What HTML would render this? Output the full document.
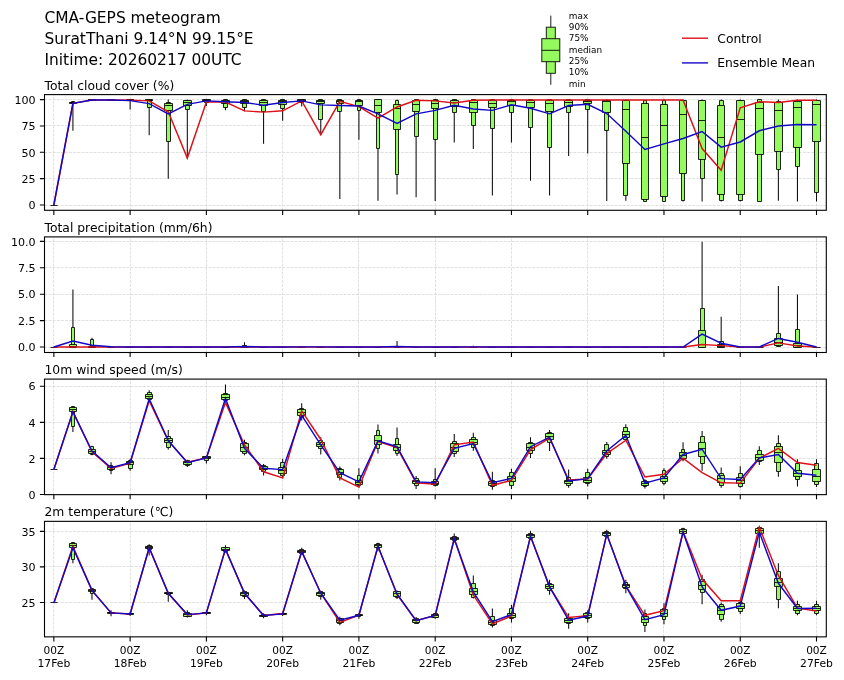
<!DOCTYPE html>
<html lang="en"><head><meta charset="utf-8"><title>CMA-GEPS meteogram</title>
<style>html,body{margin:0;padding:0;background:#fff}body{width:844px;height:680px;overflow:hidden}</style></head>
<body>
<svg width="844" height="680" viewBox="0 0 844 680" style="display:block;will-change:transform;font-family:'DejaVu Sans','Liberation Sans',sans-serif">
<rect width="844" height="680" fill="#fff"/>
<g font-size="15.43" fill="#000">
<text x="44.5" y="22.7">CMA-GEPS meteogram</text>
<text x="44.5" y="43.7">SuratThani 9.14°N 99.15°E</text>
<text x="44.5" y="64.7">Initime: 20260217 00UTC</text>
</g>
<g stroke="#111" stroke-width="0.95">
<line x1="550.8" y1="15.6" x2="550.8" y2="84.8"/>
<rect x="546.3" y="27.2" width="9" height="46.1" fill="#94fa5e"/>
<rect x="541.8" y="38.7" width="18" height="23" fill="#94fa5e"/>
<line x1="541.8" y1="50.3" x2="559.8" y2="50.3"/>
</g>
<g font-size="8.33" fill="#000" transform="translate(568.8 0) scale(1.07 1)">
<text x="0" y="18.7">max</text>
<text x="0" y="30.06">90%</text>
<text x="0" y="41.42">75%</text>
<text x="0" y="52.78">median</text>
<text x="0" y="64.14">25%</text>
<text x="0" y="75.5">10%</text>
<text x="0" y="86.86">min</text>
</g>
<line x1="682" y1="38.2" x2="708" y2="38.2" stroke="#dc1018" stroke-width="1.4"/>
<line x1="682" y1="62.9" x2="708" y2="62.9" stroke="#1408c8" stroke-width="1.4"/>
<g font-size="12.3" fill="#000"><text x="717.3" y="42.7">Control</text><text x="717.3" y="67.1">Ensemble Mean</text></g>
<g>
<text x="44.5" y="89.7" font-size="12.35" fill="#000">Total cloud cover (%)</text>
<clipPath id="c1"><rect x="44.5" y="94.6" width="781.8" height="115.7"/></clipPath>
<path d="M53.5 210.3V94.6M130.5 210.3V94.6M206.5 210.3V94.6M282.5 210.3V94.6M358.5 210.3V94.6M435.5 210.3V94.6M511.5 210.3V94.6M587.5 210.3V94.6M663.5 210.3V94.6M740.5 210.3V94.6M816.5 210.3V94.6M44.5 205.5H826.3M44.5 178.5H826.3M44.5 152.5H826.3M44.5 125.5H826.3M44.5 99.5H826.3" stroke="#d2d2d2" stroke-width="0.7" stroke-dasharray="2.85 1.25" fill="none"/>
<g clip-path="url(#c1)">
<path d="M72.92 130.69V101.08M91.98 100.65V99.6M111.05 100.65V99.6M130.12 109.51V99.6M149.18 135.23V99.6M168.25 178.65V99.6M187.31 158.1V99.6M206.38 105.92V99.6M225.45 110.35V99.6M244.51 111.19V99.6M263.58 143.87V99.6M282.65 120.79V99.6M301.71 106.56V99.6M320.78 134.7V99.6M339.84 198.89V99.6M358.91 139.86V99.6M377.98 200.68V99.6M397.04 194.57V99.6M416.11 197.2V99.6M435.18 200.99V99.6M454.24 142.5V99.6M473.31 148.93V99.6M492.37 195.41V99.6M511.44 142.5V99.6M530.51 180.65V99.6M549.57 195.41V99.6M568.64 155.88V99.6M587.71 153.46V99.6M606.77 200.99V99.6M625.84 200.68V99.6M644.91 201.84V100.13M663.97 201.84V99.6M683.04 201.52V99.6M702.1 201.52V99.6M721.17 201.52V99.6M740.24 201.52V99.6M759.3 201.84V99.6M778.37 200.68V99.6M797.44 201.52V99.6M816.5 201.52V99.6" stroke="#0a0a0a" stroke-width="1.05" fill="none"/>
<path d="M71.5 101.5H74.5V103.5H71.5ZM90.5 99.5H93.5V100.5H90.5ZM109.5 99.5H112.5V100.5H109.5ZM128.5 99.5H132.5V100.5H128.5ZM147.5 99.5H151.5V107.5H147.5ZM166.5 102.5H170.5V141.5H166.5ZM185.5 100.5H189.5V109.5H185.5ZM204.5 99.5H208.5V102.5H204.5ZM223.5 99.5H227.5V107.5H223.5ZM242.5 99.5H246.5V107.5H242.5ZM261.5 99.5H265.5V111.5H261.5ZM280.5 99.5H284.5V108.5H280.5ZM299.5 99.5H303.5V102.5H299.5ZM318.5 99.5H322.5V119.5H318.5ZM337.5 99.5H341.5V111.5H337.5ZM357.5 99.5H360.5V110.5H357.5ZM376.5 99.5H379.5V148.5H376.5ZM395.5 100.5H398.5V174.5H395.5ZM414.5 99.5H418.5V136.5H414.5ZM433.5 99.5H437.5V139.5H433.5ZM452.5 99.5H456.5V112.5H452.5ZM471.5 99.5H475.5V125.5H471.5ZM490.5 99.5H494.5V128.5H490.5ZM509.5 99.5H513.5V112.5H509.5ZM528.5 99.5H532.5V127.5H528.5ZM547.5 99.5H551.5V147.5H547.5ZM566.5 99.5H570.5V112.5H566.5ZM585.5 99.5H589.5V109.5H585.5ZM604.5 100.5H608.5V130.5H604.5ZM623.5 100.5H627.5V195.5H623.5ZM643.5 100.5H646.5V201.5H643.5ZM662.5 100.5H665.5V201.5H662.5ZM681.5 100.5H684.5V200.5H681.5ZM700.5 100.5H704.5V178.5H700.5ZM719.5 100.5H723.5V200.5H719.5ZM738.5 100.5H742.5V200.5H738.5ZM757.5 99.5H761.5V201.5H757.5ZM776.5 101.5H780.5V169.5H776.5ZM795.5 100.5H799.5V166.5H795.5ZM814.5 100.5H818.5V192.5H814.5Z" stroke="#000" stroke-width="0.85" fill="#94fa5e"/>
<path d="M69.5 102.5H76.5V103.5H69.5ZM88.5 99.5H95.5V100.5H88.5ZM107.5 99.5H114.5V100.5H107.5ZM126.5 99.5H133.5V100.5H126.5ZM145.5 99.5H152.5V100.5H145.5ZM164.5 103.5H172.5V110.5H164.5ZM183.5 100.5H191.5V105.5H183.5ZM202.5 99.5H210.5V100.5H202.5ZM221.5 100.5H229.5V103.5H221.5ZM240.5 100.5H248.5V103.5H240.5ZM259.5 100.5H267.5V105.5H259.5ZM278.5 100.5H286.5V104.5H278.5ZM297.5 99.5H305.5V101.5H297.5ZM316.5 100.5H324.5V103.5H316.5ZM336.5 100.5H343.5V103.5H336.5ZM355.5 100.5H362.5V105.5H355.5ZM374.5 99.5H381.5V112.5H374.5ZM393.5 104.5H400.5V129.5H393.5ZM412.5 100.5H419.5V111.5H412.5ZM431.5 100.5H438.5V108.5H431.5ZM450.5 100.5H458.5V106.5H450.5ZM469.5 100.5H477.5V112.5H469.5ZM488.5 100.5H496.5V107.5H488.5ZM507.5 100.5H515.5V105.5H507.5ZM526.5 100.5H534.5V107.5H526.5ZM545.5 100.5H553.5V111.5H545.5ZM564.5 100.5H572.5V106.5H564.5ZM583.5 100.5H591.5V103.5H583.5ZM602.5 100.5H610.5V112.5H602.5ZM622.5 100.5H629.5V163.5H622.5ZM641.5 103.5H648.5V199.5H641.5ZM660.5 104.5H667.5V196.5H660.5ZM679.5 100.5H686.5V173.5H679.5ZM698.5 100.5H705.5V159.5H698.5ZM717.5 105.5H724.5V194.5H717.5ZM736.5 100.5H744.5V194.5H736.5ZM755.5 102.5H763.5V154.5H755.5ZM774.5 102.5H782.5V151.5H774.5ZM793.5 101.5H801.5V147.5H793.5ZM812.5 100.5H820.5V141.5H812.5Z" stroke="#000" stroke-width="0.85" fill="#94fa5e"/>
<path d="M50.5 205.5H57.5M69.5 102.5H76.5M88.5 99.5H95.5M107.5 99.5H114.5M126.5 99.5H133.5M145.5 100.5H152.5M164.5 105.5H172.5M183.5 102.5H191.5M202.5 100.5H210.5M221.5 101.5H229.5M240.5 101.5H248.5M259.5 102.5H267.5M278.5 101.5H286.5M297.5 100.5H305.5M316.5 101.5H324.5M336.5 101.5H343.5M355.5 101.5H362.5M374.5 105.5H381.5M393.5 108.5H400.5M412.5 104.5H419.5M431.5 103.5H438.5M450.5 102.5H458.5M469.5 102.5H477.5M488.5 103.5H496.5M507.5 101.5H515.5M526.5 102.5H534.5M545.5 103.5H553.5M564.5 102.5H572.5M583.5 101.5H591.5M602.5 101.5H610.5M622.5 109.5H629.5M641.5 137.5H648.5M660.5 125.5H667.5M679.5 114.5H686.5M698.5 120.5H705.5M717.5 137.5H724.5M736.5 119.5H744.5M755.5 108.5H763.5M774.5 110.5H782.5M793.5 107.5H801.5M812.5 104.5H820.5" stroke="#000" stroke-width="0.85" fill="none"/>
<polyline points="53.85,205 72.92,103.39 91.98,99.92 111.05,99.92 130.12,100.13 149.18,100.86 168.25,111.83 187.31,158.1 206.38,102.02 225.45,102.02 244.51,110.88 263.58,112.14 282.65,110.77 301.71,100.86 320.78,134.7 339.84,101.39 358.91,106.56 377.98,118.15 397.04,106.98 416.11,100.34 435.18,100.86 454.24,103.08 473.31,100.34 492.37,99.92 511.44,99.92 530.51,99.92 549.57,99.92 568.64,99.92 587.71,99.92 606.77,99.92 625.84,99.92 644.91,99.92 663.97,99.92 683.04,99.92 702.1,148.51 721.17,170.22 740.24,107.72 759.3,101.71 778.37,102.55 797.44,100.34 816.5,100.34" stroke="#dc1018" stroke-width="1.45" fill="none" stroke-linejoin="miter"/>
<polyline points="53.85,205 72.92,103.39 91.98,99.92 111.05,99.92 130.12,100.65 149.18,103.61 168.25,113.93 187.31,104.34 206.38,100.86 225.45,101.71 244.51,102.55 263.58,105.19 282.65,102.55 301.71,100.86 320.78,104.87 339.84,105.5 358.91,106.03 377.98,113.83 397.04,123.42 416.11,113.83 435.18,110.35 454.24,105.19 473.31,108.98 492.37,110.35 511.44,104.76 530.51,108.24 549.57,113.83 568.64,105.5 587.71,104.34 606.77,113.51 625.84,131.33 644.91,149.45 663.97,143.87 683.04,138.49 702.1,131.54 721.17,147.14 740.24,141.97 759.3,130.8 778.37,125.95 797.44,124.58 816.5,124.79" stroke="#1408c8" stroke-width="1.45" fill="none" stroke-linejoin="miter"/>
</g>
<rect x="44.5" y="94.6" width="781.8" height="115.7" fill="none" stroke="#000" stroke-width="1.1"/>
<path d="M53.85 210.3v4.6M130.12 210.3v4.6M206.38 210.3v4.6M282.65 210.3v4.6M358.91 210.3v4.6M435.18 210.3v4.6M511.44 210.3v4.6M587.71 210.3v4.6M663.97 210.3v4.6M740.24 210.3v4.6M816.5 210.3v4.6M44.5 205h-4.6M44.5 178.65h-4.6M44.5 152.3h-4.6M44.5 125.95h-4.6M44.5 99.6h-4.6" stroke="#000" stroke-width="1.1" fill="none"/>
<g font-size="11.11" fill="#000" text-anchor="end">
<text x="35.7" y="209.2">0</text>
<text x="35.7" y="182.85">25</text>
<text x="35.7" y="156.5">50</text>
<text x="35.7" y="130.15">75</text>
<text x="35.7" y="103.8">100</text>
</g>
</g>
<g>
<text x="44.5" y="232" font-size="12.35" fill="#000">Total precipitation (mm/6h)</text>
<clipPath id="c2"><rect x="44.5" y="236.9" width="781.8" height="115.6"/></clipPath>
<path d="M53.5 352.5V236.9M130.5 352.5V236.9M206.5 352.5V236.9M282.5 352.5V236.9M358.5 352.5V236.9M435.5 352.5V236.9M511.5 352.5V236.9M587.5 352.5V236.9M663.5 352.5V236.9M740.5 352.5V236.9M816.5 352.5V236.9M44.5 347.5H826.3M44.5 320.5H826.3M44.5 294.5H826.3M44.5 267.5H826.3M44.5 241.5H826.3" stroke="#d2d2d2" stroke-width="0.7" stroke-dasharray="2.85 1.25" fill="none"/>
<g clip-path="url(#c2)">
<path d="M72.92 347V289.55M91.98 347V337.81M111.05 347V346.68M244.51 347V342.14M301.71 347V345.94M320.78 347V345.94M397.04 347V341.09M473.31 347V345.73M702.1 347V241.82M721.17 347V316.69M778.37 347V285.96M797.44 347V294.52" stroke="#0a0a0a" stroke-width="1.05" fill="none"/>
<path d="M71.5 327.5H74.5V347.5H71.5ZM90.5 339.5H93.5V347.5H90.5ZM242.5 345.5H246.5V347.5H242.5ZM700.5 308.5H704.5V347.5H700.5ZM719.5 341.5H723.5V347.5H719.5ZM776.5 333.5H780.5V346.5H776.5ZM795.5 329.5H799.5V347.5H795.5Z" stroke="#000" stroke-width="0.85" fill="#94fa5e"/>
<path d="M69.5 344.5H76.5V347.5H69.5ZM88.5 346.5H95.5V347.5H88.5ZM240.5 346.5H248.5V347.5H240.5ZM698.5 330.5H705.5V347.5H698.5ZM717.5 344.5H724.5V347.5H717.5ZM774.5 338.5H782.5V345.5H774.5ZM793.5 343.5H801.5V347.5H793.5Z" stroke="#000" stroke-width="0.85" fill="#94fa5e"/>
<path d="M50.5 347.5H57.5M69.5 346.5H76.5M88.5 347.5H95.5M107.5 347.5H114.5M126.5 347.5H133.5M145.5 347.5H152.5M164.5 347.5H172.5M183.5 347.5H191.5M202.5 347.5H210.5M221.5 347.5H229.5M240.5 347.5H248.5M259.5 347.5H267.5M278.5 347.5H286.5M297.5 347.5H305.5M316.5 347.5H324.5M336.5 347.5H343.5M355.5 347.5H362.5M374.5 347.5H381.5M393.5 347.5H400.5M412.5 347.5H419.5M431.5 347.5H438.5M450.5 347.5H458.5M469.5 347.5H477.5M488.5 347.5H496.5M507.5 347.5H515.5M526.5 347.5H534.5M545.5 347.5H553.5M564.5 347.5H572.5M583.5 347.5H591.5M602.5 347.5H610.5M622.5 347.5H629.5M641.5 347.5H648.5M660.5 347.5H667.5M679.5 347.5H686.5M698.5 344.5H705.5M717.5 346.5H724.5M736.5 347.5H744.5M755.5 347.5H763.5M774.5 342.5H782.5M793.5 345.5H801.5M812.5 347.5H820.5" stroke="#000" stroke-width="0.85" fill="none"/>
<polyline points="53.85,347 72.92,347 91.98,347 111.05,347 130.12,347 149.18,347 168.25,347 187.31,347 206.38,347 225.45,347 244.51,347 263.58,347 282.65,347 301.71,347 320.78,347 339.84,347 358.91,347 377.98,347 397.04,347 416.11,347 435.18,347 454.24,347 473.31,347 492.37,347 511.44,347 530.51,347 549.57,347 568.64,347 587.71,347 606.77,347 625.84,347 644.91,347 663.97,347 683.04,347 702.1,344.57 721.17,345.63 740.24,347 759.3,347 778.37,342.88 797.44,346.05 816.5,347" stroke="#dc1018" stroke-width="1.45" fill="none" stroke-linejoin="miter"/>
<polyline points="53.85,347 72.92,340.98 91.98,345.31 111.05,346.79 130.12,347 149.18,347 168.25,347 187.31,347 206.38,347 225.45,347 244.51,346.58 263.58,347 282.65,347 301.71,346.89 320.78,346.89 339.84,347 358.91,347 377.98,347 397.04,346.58 416.11,347 435.18,347 454.24,347 473.31,346.89 492.37,347 511.44,347 530.51,347 549.57,347 568.64,347 587.71,347 606.77,347 625.84,347 644.91,347 663.97,347 683.04,347 702.1,334.12 721.17,343.2 740.24,347 759.3,347 778.37,338.45 797.44,342.25 816.5,347" stroke="#1408c8" stroke-width="1.45" fill="none" stroke-linejoin="miter"/>
</g>
<rect x="44.5" y="236.9" width="781.8" height="115.6" fill="none" stroke="#000" stroke-width="1.1"/>
<path d="M53.85 352.5v4.6M130.12 352.5v4.6M206.38 352.5v4.6M282.65 352.5v4.6M358.91 352.5v4.6M435.18 352.5v4.6M511.44 352.5v4.6M587.71 352.5v4.6M663.97 352.5v4.6M740.24 352.5v4.6M816.5 352.5v4.6M44.5 347h-4.6M44.5 320.6h-4.6M44.5 294.2h-4.6M44.5 267.8h-4.6M44.5 241.4h-4.6" stroke="#000" stroke-width="1.1" fill="none"/>
<g font-size="11.11" fill="#000" text-anchor="end">
<text x="35.7" y="351.2">0.0</text>
<text x="35.7" y="324.8">2.5</text>
<text x="35.7" y="298.4">5.0</text>
<text x="35.7" y="272">7.5</text>
<text x="35.7" y="245.6">10.0</text>
</g>
</g>
<g>
<text x="44.5" y="374.2" font-size="12.35" fill="#000">10m wind speed (m/s)</text>
<clipPath id="c3"><rect x="44.5" y="379.1" width="781.8" height="115.55"/></clipPath>
<path d="M53.5 494.65V379.1M130.5 494.65V379.1M206.5 494.65V379.1M282.5 494.65V379.1M358.5 494.65V379.1M435.5 494.65V379.1M511.5 494.65V379.1M587.5 494.65V379.1M663.5 494.65V379.1M740.5 494.65V379.1M816.5 494.65V379.1M44.5 494.5H826.3M44.5 458.5H826.3M44.5 422.5H826.3M44.5 386.5H826.3" stroke="#d2d2d2" stroke-width="0.7" stroke-dasharray="2.85 1.25" fill="none"/>
<g clip-path="url(#c3)">
<path d="M72.92 431.9V405.92M91.98 455.35V445.79M111.05 474.3V462.21M130.12 470.87V458.78M149.18 402.5V390.23M168.25 449.4V430.1M187.31 466.9V459.68M206.38 463.47V455.89M225.45 404.3V384.46M244.51 455.35V439.66M263.58 475.56V464.01M282.65 478.44V458.78M301.71 420.54V403.22M320.78 454.45V437.13M339.84 480.43V466.54M358.91 487.46V468.34M377.98 453.55V424.5M397.04 456.07V427.57M416.11 489.09V476.1M435.18 486.56V468.34M454.24 456.98V433.89M473.31 450.66V432.8M492.37 489.63V471.77M511.44 489.09V468.7M530.51 457.88V437.13M549.57 451.02V430.1M568.64 487.64V469.6M587.71 486.56V468.7M606.77 458.78V442M625.84 440.56V424.14M644.91 488.55V479.17M663.97 485.3V468.34M683.04 461.31V442.36M702.1 470.87V431M721.17 487.64V467.44M740.24 487.64V466.18M759.3 464.91V446.33M778.37 476.64V435.33M797.44 486.56V459.32M816.5 487.1V459.32" stroke="#0a0a0a" stroke-width="1.05" fill="none"/>
<path d="M71.5 406.5H74.5V426.5H71.5ZM90.5 446.5H93.5V454.5H90.5ZM109.5 465.5H112.5V470.5H109.5ZM128.5 460.5H132.5V468.5H128.5ZM147.5 392.5H151.5V399.5H147.5ZM166.5 436.5H170.5V447.5H166.5ZM185.5 460.5H189.5V465.5H185.5ZM204.5 456.5H208.5V460.5H204.5ZM223.5 393.5H227.5V400.5H223.5ZM242.5 442.5H246.5V453.5H242.5ZM261.5 465.5H265.5V471.5H261.5ZM280.5 462.5H284.5V475.5H280.5ZM299.5 408.5H303.5V417.5H299.5ZM318.5 440.5H322.5V448.5H318.5ZM337.5 468.5H341.5V477.5H337.5ZM357.5 475.5H360.5V485.5H357.5ZM376.5 430.5H379.5V448.5H376.5ZM395.5 438.5H398.5V453.5H395.5ZM414.5 478.5H418.5V485.5H414.5ZM433.5 479.5H437.5V485.5H433.5ZM452.5 441.5H456.5V453.5H452.5ZM471.5 437.5H475.5V447.5H471.5ZM490.5 480.5H494.5V486.5H490.5ZM509.5 472.5H513.5V485.5H509.5ZM528.5 442.5H532.5V453.5H528.5ZM547.5 432.5H551.5V442.5H547.5ZM566.5 477.5H570.5V485.5H566.5ZM585.5 472.5H589.5V483.5H585.5ZM604.5 444.5H608.5V456.5H604.5ZM623.5 427.5H627.5V439.5H623.5ZM643.5 480.5H646.5V486.5H643.5ZM662.5 470.5H665.5V483.5H662.5ZM681.5 449.5H684.5V459.5H681.5ZM700.5 436.5H704.5V463.5H700.5ZM719.5 473.5H723.5V485.5H719.5ZM738.5 473.5H742.5V486.5H738.5ZM757.5 450.5H761.5V461.5H757.5ZM776.5 443.5H780.5V471.5H776.5ZM795.5 463.5H799.5V479.5H795.5ZM814.5 463.5H818.5V484.5H814.5Z" stroke="#000" stroke-width="0.85" fill="#94fa5e"/>
<path d="M69.5 407.5H76.5V411.5H69.5ZM88.5 449.5H95.5V453.5H88.5ZM107.5 466.5H114.5V469.5H107.5ZM126.5 461.5H133.5V464.5H126.5ZM145.5 394.5H152.5V398.5H145.5ZM164.5 438.5H172.5V442.5H164.5ZM183.5 461.5H191.5V464.5H183.5ZM202.5 456.5H210.5V458.5H202.5ZM221.5 394.5H229.5V399.5H221.5ZM240.5 443.5H248.5V451.5H240.5ZM259.5 466.5H267.5V469.5H259.5ZM278.5 467.5H286.5V473.5H278.5ZM297.5 409.5H305.5V415.5H297.5ZM316.5 442.5H324.5V446.5H316.5ZM336.5 469.5H343.5V474.5H336.5ZM355.5 480.5H362.5V484.5H355.5ZM374.5 435.5H381.5V444.5H374.5ZM393.5 444.5H400.5V450.5H393.5ZM412.5 480.5H419.5V483.5H412.5ZM431.5 481.5H438.5V484.5H431.5ZM450.5 443.5H458.5V451.5H450.5ZM469.5 439.5H477.5V444.5H469.5ZM488.5 481.5H496.5V485.5H488.5ZM507.5 476.5H515.5V481.5H507.5ZM526.5 443.5H534.5V450.5H526.5ZM545.5 433.5H553.5V439.5H545.5ZM564.5 480.5H572.5V483.5H564.5ZM583.5 477.5H591.5V482.5H583.5ZM602.5 450.5H610.5V454.5H602.5ZM622.5 431.5H629.5V437.5H622.5ZM641.5 481.5H648.5V485.5H641.5ZM660.5 476.5H667.5V481.5H660.5ZM679.5 452.5H686.5V458.5H679.5ZM698.5 442.5H705.5V456.5H698.5ZM717.5 475.5H724.5V482.5H717.5ZM736.5 477.5H744.5V483.5H736.5ZM755.5 454.5H763.5V460.5H755.5ZM774.5 446.5H782.5V462.5H774.5ZM793.5 470.5H801.5V476.5H793.5ZM812.5 469.5H820.5V481.5H812.5Z" stroke="#000" stroke-width="0.85" fill="#94fa5e"/>
<path d="M50.5 469.5H57.5M69.5 409.5H76.5M88.5 451.5H95.5M107.5 467.5H114.5M126.5 462.5H133.5M145.5 396.5H152.5M164.5 440.5H172.5M183.5 462.5H191.5M202.5 457.5H210.5M221.5 397.5H229.5M240.5 447.5H248.5M259.5 468.5H267.5M278.5 470.5H286.5M297.5 412.5H305.5M316.5 444.5H324.5M336.5 472.5H343.5M355.5 482.5H362.5M374.5 440.5H381.5M393.5 447.5H400.5M412.5 481.5H419.5M431.5 483.5H438.5M450.5 447.5H458.5M469.5 442.5H477.5M488.5 483.5H496.5M507.5 478.5H515.5M526.5 447.5H534.5M545.5 436.5H553.5M564.5 481.5H572.5M583.5 480.5H591.5M602.5 452.5H610.5M622.5 434.5H629.5M641.5 483.5H648.5M660.5 478.5H667.5M679.5 455.5H686.5M698.5 448.5H705.5M717.5 478.5H724.5M736.5 480.5H744.5M755.5 457.5H763.5M774.5 452.5H782.5M793.5 473.5H801.5M812.5 476.5H820.5" stroke="#000" stroke-width="0.85" fill="none"/>
<polyline points="53.85,469.6 72.92,411.52 91.98,451.75 111.05,468.34 130.12,463.11 149.18,400.69 168.25,440.92 187.31,462.21 206.38,457.88 225.45,402.5 244.51,444.89 263.58,471.77 282.65,477.9 301.71,410.97 320.78,439.48 339.84,477.9 358.91,487.1 377.98,441.46 397.04,447.6 416.11,482.77 435.18,484.22 454.24,444.89 473.31,442 492.37,485.3 511.44,480.43 530.51,449.58 549.57,438.03 568.64,480.07 587.71,478.99 606.77,453.55 625.84,440.2 644.91,477 663.97,474.3 683.04,458.24 702.1,472.67 721.17,482.77 740.24,483.13 759.3,458.24 778.37,448.32 797.44,462.57 816.5,465.28" stroke="#dc1018" stroke-width="1.45" fill="none" stroke-linejoin="miter"/>
<polyline points="53.85,469.6 72.92,411.88 91.98,451.02 111.05,467.8 130.12,462.75 149.18,398.71 168.25,440.56 187.31,462.75 206.38,457.88 225.45,398.53 244.51,448.32 263.58,468.34 282.65,469.6 301.71,415.48 320.78,444.89 339.84,472.67 358.91,481.87 377.98,440.92 397.04,446.69 416.11,481.87 435.18,482.77 454.24,448.32 473.31,443.63 492.37,482.77 511.44,478.44 530.51,446.69 549.57,437.13 568.64,480.97 587.71,478.62 606.77,451.02 625.84,435.33 644.91,483.13 663.97,477.9 683.04,454.45 702.1,449.22 721.17,478.62 740.24,479.53 759.3,457.88 778.37,454.45 797.44,473.21 816.5,475.2" stroke="#1408c8" stroke-width="1.45" fill="none" stroke-linejoin="miter"/>
</g>
<rect x="44.5" y="379.1" width="781.8" height="115.55" fill="none" stroke="#000" stroke-width="1.1"/>
<path d="M53.85 494.65v4.6M130.12 494.65v4.6M206.38 494.65v4.6M282.65 494.65v4.6M358.91 494.65v4.6M435.18 494.65v4.6M511.44 494.65v4.6M587.71 494.65v4.6M663.97 494.65v4.6M740.24 494.65v4.6M816.5 494.65v4.6M44.5 494.5h-4.6M44.5 458.42h-4.6M44.5 422.34h-4.6M44.5 386.26h-4.6" stroke="#000" stroke-width="1.1" fill="none"/>
<g font-size="11.11" fill="#000" text-anchor="end">
<text x="35.7" y="498.7">0</text>
<text x="35.7" y="462.62">2</text>
<text x="35.7" y="426.54">4</text>
<text x="35.7" y="390.46">6</text>
</g>
</g>
<g>
<text x="44.5" y="516.45" font-size="12.35" fill="#000">2m temperature (℃)</text>
<clipPath id="c4"><rect x="44.5" y="521.35" width="781.8" height="115.5"/></clipPath>
<path d="M53.5 636.85V521.35M130.5 636.85V521.35M206.5 636.85V521.35M282.5 636.85V521.35M358.5 636.85V521.35M435.5 636.85V521.35M511.5 636.85V521.35M587.5 636.85V521.35M663.5 636.85V521.35M740.5 636.85V521.35M816.5 636.85V521.35M44.5 602.5H826.3M44.5 566.5H826.3M44.5 531.5H826.3" stroke="#d2d2d2" stroke-width="0.7" stroke-dasharray="2.85 1.25" fill="none"/>
<g clip-path="url(#c4)">
<path d="M72.92 563.37V542.02M91.98 599.65V588.63M111.05 616.37V610.33M130.12 616.02V611.75M149.18 555.54V544.16M168.25 601.79V591.83M187.31 617.44V610.33M206.38 615.31V610.33M225.45 552.7V545.22M244.51 598.94V590.4M263.58 618.15V613.17M282.65 616.02V611.75M301.71 554.83V547.71M320.78 599.65V590.76M339.84 625.27V616.73M358.91 618.86V613.17M377.98 551.27V542.73M397.04 598.94V590.4M416.11 623.85V617.09M435.18 618.86V612.82M454.24 542.73V533.48M473.31 598.59V575.46M492.37 627.4V608.55M511.44 622.42V604.63M530.51 539.89V530.85M549.57 594.67V579.73M568.64 628.83V613.17M587.71 622.42V610.33M606.77 537.75V529.64M625.84 593.25V579.73M644.91 632.03V609.62M663.97 624.2V603.21M683.04 534.91V527.79M702.1 604.21V574.75M721.17 621.71V602.5M740.24 613.88V600.79M759.3 547.71V526.37M778.37 608.19V563.37M797.44 615.31V600.79M816.5 615.31V600.79" stroke="#0a0a0a" stroke-width="1.05" fill="none"/>
<path d="M71.5 542.5H74.5V559.5H71.5ZM90.5 588.5H93.5V593.5H90.5ZM109.5 612.5H112.5V613.5H109.5ZM128.5 613.5H132.5V614.5H128.5ZM147.5 545.5H151.5V549.5H147.5ZM166.5 592.5H170.5V594.5H166.5ZM185.5 612.5H189.5V616.5H185.5ZM204.5 612.5H208.5V613.5H204.5ZM223.5 547.5H227.5V551.5H223.5ZM242.5 591.5H246.5V596.5H242.5ZM261.5 614.5H265.5V616.5H261.5ZM280.5 613.5H284.5V614.5H280.5ZM299.5 549.5H303.5V553.5H299.5ZM318.5 591.5H322.5V596.5H318.5ZM337.5 618.5H341.5V623.5H337.5ZM357.5 614.5H360.5V616.5H357.5ZM376.5 543.5H379.5V548.5H376.5ZM395.5 591.5H398.5V597.5H395.5ZM414.5 618.5H418.5V623.5H414.5ZM433.5 613.5H437.5V617.5H433.5ZM452.5 536.5H456.5V540.5H452.5ZM471.5 583.5H475.5V597.5H471.5ZM490.5 616.5H494.5V625.5H490.5ZM509.5 608.5H513.5V618.5H509.5ZM528.5 533.5H532.5V538.5H528.5ZM547.5 583.5H551.5V590.5H547.5ZM566.5 617.5H570.5V623.5H566.5ZM585.5 612.5H589.5V618.5H585.5ZM604.5 531.5H608.5V536.5H604.5ZM623.5 582.5H627.5V588.5H623.5ZM643.5 613.5H646.5V625.5H643.5ZM662.5 608.5H665.5V619.5H662.5ZM681.5 528.5H684.5V533.5H681.5ZM700.5 579.5H704.5V592.5H700.5ZM719.5 604.5H723.5V619.5H719.5ZM738.5 602.5H742.5V611.5H738.5ZM757.5 527.5H761.5V534.5H757.5ZM776.5 571.5H780.5V599.5H776.5ZM795.5 604.5H799.5V613.5H795.5ZM814.5 604.5H818.5V613.5H814.5Z" stroke="#000" stroke-width="0.85" fill="#94fa5e"/>
<path d="M69.5 543.5H76.5V547.5H69.5ZM88.5 589.5H95.5V591.5H88.5ZM107.5 612.5H114.5V613.5H107.5ZM126.5 613.5H133.5V614.5H126.5ZM145.5 546.5H152.5V548.5H145.5ZM164.5 592.5H172.5V593.5H164.5ZM183.5 613.5H191.5V616.5H183.5ZM202.5 612.5H210.5V613.5H202.5ZM221.5 547.5H229.5V550.5H221.5ZM240.5 592.5H248.5V595.5H240.5ZM259.5 615.5H267.5V616.5H259.5ZM278.5 613.5H286.5V614.5H278.5ZM297.5 550.5H305.5V552.5H297.5ZM316.5 592.5H324.5V595.5H316.5ZM336.5 618.5H343.5V622.5H336.5ZM355.5 614.5H362.5V615.5H355.5ZM374.5 544.5H381.5V547.5H374.5ZM393.5 591.5H400.5V596.5H393.5ZM412.5 619.5H419.5V622.5H412.5ZM431.5 614.5H438.5V617.5H431.5ZM450.5 537.5H458.5V539.5H450.5ZM469.5 588.5H477.5V594.5H469.5ZM488.5 620.5H496.5V624.5H488.5ZM507.5 613.5H515.5V617.5H507.5ZM526.5 534.5H534.5V537.5H526.5ZM545.5 584.5H553.5V588.5H545.5ZM564.5 618.5H572.5V622.5H564.5ZM583.5 613.5H591.5V617.5H583.5ZM602.5 532.5H610.5V535.5H602.5ZM622.5 584.5H629.5V587.5H622.5ZM641.5 616.5H648.5V622.5H641.5ZM660.5 609.5H667.5V616.5H660.5ZM679.5 529.5H686.5V533.5H679.5ZM698.5 581.5H705.5V589.5H698.5ZM717.5 606.5H724.5V614.5H717.5ZM736.5 603.5H744.5V608.5H736.5ZM755.5 528.5H763.5V533.5H755.5ZM774.5 578.5H782.5V586.5H774.5ZM793.5 606.5H801.5V610.5H793.5ZM812.5 606.5H820.5V610.5H812.5Z" stroke="#000" stroke-width="0.85" fill="#94fa5e"/>
<path d="M50.5 602.5H57.5M69.5 545.5H76.5M88.5 590.5H95.5M107.5 612.5H114.5M126.5 613.5H133.5M145.5 547.5H152.5M164.5 593.5H172.5M183.5 614.5H191.5M202.5 612.5H210.5M221.5 549.5H229.5M240.5 593.5H248.5M259.5 615.5H267.5M278.5 613.5H286.5M297.5 551.5H305.5M316.5 593.5H324.5M336.5 620.5H343.5M355.5 615.5H362.5M374.5 545.5H381.5M393.5 593.5H400.5M412.5 620.5H419.5M431.5 615.5H438.5M450.5 538.5H458.5M469.5 591.5H477.5M488.5 622.5H496.5M507.5 615.5H515.5M526.5 535.5H534.5M545.5 586.5H553.5M564.5 620.5H572.5M583.5 615.5H591.5M602.5 533.5H610.5M622.5 585.5H629.5M641.5 619.5H648.5M660.5 613.5H667.5M679.5 531.5H686.5M698.5 585.5H705.5M717.5 610.5H724.5M736.5 606.5H744.5M755.5 530.5H763.5M774.5 582.5H782.5M793.5 608.5H801.5M812.5 608.5H820.5" stroke="#000" stroke-width="0.85" fill="none"/>
<polyline points="53.85,603 72.92,546.29 91.98,590.4 111.05,612.89 130.12,613.88 149.18,547.71 168.25,593.25 187.31,614.95 206.38,612.89 225.45,549.14 244.51,593.25 263.58,615.52 282.65,613.53 301.71,551.27 320.78,593.25 339.84,622.42 358.91,615.31 377.98,546.29 397.04,594.67 416.11,620.71 435.18,615.52 454.24,538.47 473.31,595.03 492.37,623.85 511.44,616.02 530.51,536.33 549.57,586.85 568.64,617.44 587.71,615.66 606.77,534.2 625.84,585.78 644.91,615.31 663.97,610.68 683.04,531.71 702.1,579.02 721.17,600.79 740.24,600.79 759.3,527.08 778.37,575.46 797.44,608.19 816.5,611.04" stroke="#dc1018" stroke-width="1.45" fill="none" stroke-linejoin="miter"/>
<polyline points="53.85,603 72.92,547.71 91.98,590.4 111.05,612.89 130.12,613.88 149.18,547.71 168.25,593.25 187.31,614.6 206.38,612.89 225.45,549.14 244.51,593.25 263.58,615.52 282.65,613.88 301.71,551.63 320.78,593.25 339.84,620.29 358.91,615.31 377.98,546.29 397.04,593.96 416.11,620.71 435.18,615.52 454.24,538.82 473.31,591.83 492.37,621.71 511.44,614.6 530.51,536.33 549.57,586.85 568.64,620.29 587.71,616.02 606.77,534.2 625.84,586.14 644.91,619.58 663.97,614.6 683.04,532.06 702.1,586.85 721.17,610.33 740.24,606.06 759.3,532.06 778.37,583.29 797.44,608.55 816.5,608.19" stroke="#1408c8" stroke-width="1.45" fill="none" stroke-linejoin="miter"/>
</g>
<rect x="44.5" y="521.35" width="781.8" height="115.5" fill="none" stroke="#000" stroke-width="1.1"/>
<path d="M53.85 636.85v4.6M130.12 636.85v4.6M206.38 636.85v4.6M282.65 636.85v4.6M358.91 636.85v4.6M435.18 636.85v4.6M511.44 636.85v4.6M587.71 636.85v4.6M663.97 636.85v4.6M740.24 636.85v4.6M816.5 636.85v4.6M44.5 602.5h-4.6M44.5 566.92h-4.6M44.5 531.35h-4.6" stroke="#000" stroke-width="1.1" fill="none"/>
<g font-size="11.11" fill="#000" text-anchor="end">
<text x="35.7" y="606.7">25</text>
<text x="35.7" y="571.12">30</text>
<text x="35.7" y="535.55">35</text>
</g>
<g font-size="11.11" fill="#000" text-anchor="middle">
<text x="53.85" y="654.4" textLength="20.7" lengthAdjust="spacingAndGlyphs">00Z</text><text x="53.85" y="666.6" textLength="32.8" lengthAdjust="spacingAndGlyphs">17Feb</text>
<text x="130.12" y="654.4" textLength="20.7" lengthAdjust="spacingAndGlyphs">00Z</text><text x="130.12" y="666.6" textLength="32.8" lengthAdjust="spacingAndGlyphs">18Feb</text>
<text x="206.38" y="654.4" textLength="20.7" lengthAdjust="spacingAndGlyphs">00Z</text><text x="206.38" y="666.6" textLength="32.8" lengthAdjust="spacingAndGlyphs">19Feb</text>
<text x="282.65" y="654.4" textLength="20.7" lengthAdjust="spacingAndGlyphs">00Z</text><text x="282.65" y="666.6" textLength="32.8" lengthAdjust="spacingAndGlyphs">20Feb</text>
<text x="358.91" y="654.4" textLength="20.7" lengthAdjust="spacingAndGlyphs">00Z</text><text x="358.91" y="666.6" textLength="32.8" lengthAdjust="spacingAndGlyphs">21Feb</text>
<text x="435.18" y="654.4" textLength="20.7" lengthAdjust="spacingAndGlyphs">00Z</text><text x="435.18" y="666.6" textLength="32.8" lengthAdjust="spacingAndGlyphs">22Feb</text>
<text x="511.44" y="654.4" textLength="20.7" lengthAdjust="spacingAndGlyphs">00Z</text><text x="511.44" y="666.6" textLength="32.8" lengthAdjust="spacingAndGlyphs">23Feb</text>
<text x="587.71" y="654.4" textLength="20.7" lengthAdjust="spacingAndGlyphs">00Z</text><text x="587.71" y="666.6" textLength="32.8" lengthAdjust="spacingAndGlyphs">24Feb</text>
<text x="663.97" y="654.4" textLength="20.7" lengthAdjust="spacingAndGlyphs">00Z</text><text x="663.97" y="666.6" textLength="32.8" lengthAdjust="spacingAndGlyphs">25Feb</text>
<text x="740.24" y="654.4" textLength="20.7" lengthAdjust="spacingAndGlyphs">00Z</text><text x="740.24" y="666.6" textLength="32.8" lengthAdjust="spacingAndGlyphs">26Feb</text>
<text x="816.5" y="654.4" textLength="20.7" lengthAdjust="spacingAndGlyphs">00Z</text><text x="816.5" y="666.6" textLength="32.8" lengthAdjust="spacingAndGlyphs">27Feb</text>
</g>
</g>
</svg>
</body></html>
